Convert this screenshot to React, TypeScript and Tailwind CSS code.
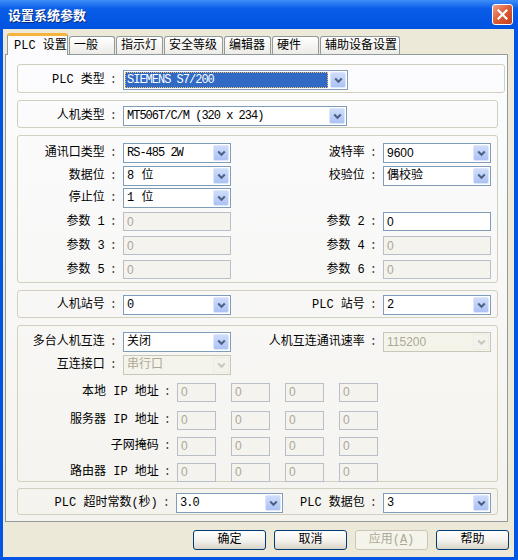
import React from 'react';

const mono = "font-['Liberation_Mono','Noto_Sans_CJK_SC',monospace]";

const isLatin = (s: string) => /^[\x20-\x7E]+$/.test(s);

const Chevron = ({ disabled }: { disabled?: boolean }) => (
  <svg width="9" height="7" viewBox="0 0 9 7">
    <path d="M1.2 1.5 L4.5 4.8 L7.8 1.5" fill="none" stroke={disabled ? '#C9C7BA' : '#4D6185'} strokeWidth="2" />
  </svg>
);

type ComboProps = { value: string; w: string; disabled?: boolean; selected?: boolean; sans?: boolean };

const Combo = ({ value, w, disabled, selected, sans }: ComboProps) => (
  <div
    className={`flex h-[20px] ${w} shrink-0 items-stretch border p-px ${
      disabled ? 'border-[#C9C7BA] bg-[#F5F4EA] text-[#ACA899]' : 'border-[#7F9DB9] bg-white text-black'
    }`}
  >
    <div className="flex min-w-0 flex-1 pr-[2px]">
      <span
        className={`flex flex-1 items-center overflow-hidden whitespace-nowrap pl-[2px] ${
          selected ? 'bg-[#316AC5] text-white outline-1 -outline-offset-1 outline-dotted outline-[#F4C06A]' : ''
        } ${sans ? "font-['Liberation_Sans','Noto_Sans_CJK_SC',sans-serif]" : isLatin(value) ? 'tracking-[-1px]' : ''}`}
      >
        {value}
      </span>
    </div>
    <div
      className={`flex w-[16px] shrink-0 items-center justify-center rounded-[2px] border ${
        disabled ? 'border-[#EDEBE2] bg-[#F3F2EC]' : 'border-[#DCE6FC] bg-linear-to-b from-[#CFDDFC] to-[#ABC2F3]'
      }`}
    >
      <Chevron disabled={disabled} />
    </div>
  </div>
);

type FieldProps = { value: string; w: string; disabled?: boolean };

const Field = ({ value, w, disabled }: FieldProps) => (
  <div
    className={`flex h-[19px] ${w} shrink-0 items-center border pl-[3px] font-['Liberation_Sans',sans-serif] ${
      disabled ? 'border-[#B9BEC8] bg-[#F4F3EE] text-[#ACA899]' : 'border-[#7F9DB9] bg-white text-black'
    }`}
  >
    {value}
  </div>
);

const Label = ({ text, w }: { text: string; w: string }) => (
  <div className={`flex h-[20px] ${w} shrink-0 items-center justify-end whitespace-nowrap pr-[6px]`}>
    {text}
    <span className="ml-[5px] text-[#444]">:</span>
  </div>
);

const Group = ({ className, children }: { className: string; children: React.ReactNode }) => (
  <div className={`rounded-[3px] border border-[#D0D0BF] ${className}`}>{children}</div>
);

const IpRow = ({ label, className }: { label: string; className: string }) => (
  <div className={`flex items-center ${className}`}>
    <Label text={label} w="w-[159px]" />
    <div className="flex gap-[15px]">
      {[0, 1, 2, 3].map((i) => (
        <Field key={i} value="0" w="w-[39px]" disabled />
      ))}
    </div>
  </div>
);

const tabs = [
  { label: '一般', w: 'w-[46px]' },
  { label: '指示灯', w: 'w-[47px]' },
  { label: '安全等级', w: 'w-[59px]' },
  { label: '编辑器', w: 'w-[47px]' },
  { label: '硬件', w: 'w-[47px]' },
  { label: '辅助设备设置', w: 'w-[80px]' },
];

export default function App() {
  return (
    <div className={`flex h-[560px] w-[518px] flex-col bg-[#0055E5] text-[12px] leading-none text-black ${mono}`}>
      {/* Title bar */}
      <div className="flex h-[29px] shrink-0 items-center justify-between bg-linear-to-b from-[#3D8EF7] via-[#0A5DE8] via-30% to-[#0052E0] pl-[8px] pr-[5px]">
        <span className="text-[13px] font-bold text-white [text-shadow:1px_1px_0_#0A2A7A] font-['Noto_Sans_CJK_SC',sans-serif]">
          设置系统参数
        </span>
        <div className="flex h-[21px] w-[21px] items-center justify-center rounded-[3px] border border-white bg-linear-to-br from-[#F0A085] via-[#DC5A33] to-[#C2401C]">
          <svg width="11" height="11" viewBox="0 0 11 11">
            <path d="M1.5 1.5 L9.5 9.5 M9.5 1.5 L1.5 9.5" stroke="white" strokeWidth="2.2" strokeLinecap="square" />
          </svg>
        </div>
      </div>

      {/* Body */}
      <div className="ml-[3px] mr-[4px] mb-[3px] flex flex-1 flex-col bg-[#ECE9D8]">
        {/* Tabs */}
        <div className="relative z-10 mt-[4px] flex h-[21px] items-end pl-[4px]">
          <div className="-mb-px flex h-[22px] w-[61px] items-center rounded-t-[3px] border-x border-t-[3px] border-x-[#919B9C] border-t-[#F7B43C] bg-[#FCFCFE] pl-[6px]">
            PLC 设置
          </div>
          {tabs.map((t) => (
            <div
              key={t.label}
              className={`ml-px flex h-[18px] ${t.w} items-center rounded-t-[3px] border-x border-t border-[#919B9C] bg-linear-to-b from-white to-[#ECEBE6] pl-[4px]`}
            >
              {t.label}
            </div>
          ))}
        </div>

        {/* Tab page */}
        <div className="ml-[2px] flex h-[468px] w-[503px] flex-col border border-[#919B9C] bg-linear-to-b from-[#FCFCFE] to-[#F4F3EE] pl-[11px] pt-[9px]">
          <Group className="h-[29px] w-[488px] pt-[5px]">
            <div className="flex">
              <Label text="PLC 类型" w="w-[105px]" />
              <Combo value="SIEMENS S7/200" w="w-[225px]" selected />
            </div>
          </Group>

          <Group className="mt-[7px] h-[28px] w-[481px] pt-[5px]">
            <div className="flex">
              <Label text="人机类型" w="w-[105px]" />
              <Combo value="MT506T/C/M (320 x 234)" w="w-[224px]" />
            </div>
          </Group>

          <Group className="mt-[7px] h-[148px] w-[481px] pt-[7px]">
            <div className="grid grid-cols-[105px_108px_152px_108px] grid-rows-[23px_22px_24px_24px_24px_19px] items-start">
              <Label text="通讯口类型" w="w-full" />
              <Combo value="RS-485 2W" w="w-[108px]" />
              <Label text="波特率" w="w-full" />
              <Combo value="9600" w="w-[108px]" sans />

              <Label text="数据位" w="w-full" />
              <Combo value="8 位" w="w-[108px]" />
              <Label text="校验位" w="w-full" />
              <Combo value="偶校验" w="w-[108px]" />

              <Label text="停止位" w="w-full" />
              <Combo value="1 位" w="w-[108px]" />
              <div />
              <div />

              <Label text="参数 1" w="w-full" />
              <Field value="0" w="w-[108px]" disabled />
              <Label text="参数 2" w="w-full" />
              <Field value="0" w="w-[108px]" />

              <Label text="参数 3" w="w-full" />
              <Field value="0" w="w-[108px]" disabled />
              <Label text="参数 4" w="w-full" />
              <Field value="0" w="w-[108px]" disabled />

              <Label text="参数 5" w="w-full" />
              <Field value="0" w="w-[108px]" disabled />
              <Label text="参数 6" w="w-full" />
              <Field value="0" w="w-[108px]" disabled />
            </div>
          </Group>

          <Group className="mt-[7px] h-[28px] w-[481px] pt-[4px]">
            <div className="grid grid-cols-[105px_108px_152px_108px]">
              <Label text="人机站号" w="w-full" />
              <Combo value="0" w="w-[108px]" />
              <Label text="PLC 站号" w="w-full" />
              <Combo value="2" w="w-[108px]" />
            </div>
          </Group>

          <Group className="mt-[7px] h-[157px] w-[481px] pt-[6px]">
            <div className="grid grid-cols-[105px_108px_152px_108px] grid-rows-[23px_20px]">
              <Label text="多台人机互连" w="w-full" />
              <Combo value="关闭" w="w-[108px]" />
              <Label text="人机互连通讯速率" w="w-full" />
              <Combo value="115200" w="w-[108px]" sans disabled />

              <Label text="互连接口" w="w-full" />
              <Combo value="串行口" w="w-[108px]" disabled />
              <div />
              <div />
            </div>
            <IpRow label="本地 IP 地址" className="mt-[7px]" />
            <IpRow label="服务器 IP 地址" className="mt-[8px]" />
            <IpRow label="子网掩码" className="mt-[6px]" />
            <IpRow label="路由器 IP 地址" className="mt-[6px]" />
          </Group>

          <Group className="mt-[6px] h-[27px] w-[481px] pt-[4px]">
            <div className="grid grid-cols-[158px_107px_100px_108px]">
              <Label text="PLC 超时常数(秒)" w="w-full" />
              <Combo value="3.0" w="w-[107px]" />
              <Label text="PLC 数据包" w="w-full" />
              <Combo value="3" w="w-[108px]" />
            </div>
          </Group>
        </div>

        {/* Buttons */}
        <div className="mt-[8px] flex justify-end gap-[8px] pr-[5px]">
          <div className="flex h-[20px] w-[73px] items-center justify-center rounded-[3px] border border-[#003C74] bg-linear-to-b from-white via-[#F4F3EF] to-[#D9D4C9]">
            确定
          </div>
          <div className="flex h-[20px] w-[73px] items-center justify-center rounded-[3px] border border-[#003C74] bg-linear-to-b from-white via-[#F4F3EF] to-[#D9D4C9]">
            取消
          </div>
          <div className="flex h-[20px] w-[73px] items-center justify-center rounded-[3px] border border-[#C9C7BA] bg-[#F5F4EA] text-[#ACA899]">
            应用(<span className="underline">A</span>)
          </div>
          <div className="flex h-[20px] w-[73px] items-center justify-center rounded-[3px] border border-[#003C74] bg-linear-to-b from-white via-[#F4F3EF] to-[#D9D4C9]">
            帮助
          </div>
        </div>
      </div>
    </div>
  );
}
